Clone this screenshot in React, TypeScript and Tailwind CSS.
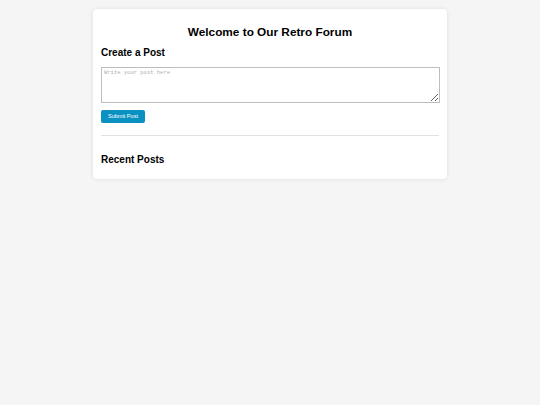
export default function App() {
  return (
    <div className="min-h-screen w-full bg-[#f5f5f5] pt-[9px] font-['Liberation_Sans',Arial,sans-serif] text-black">
      <div className="mx-auto flex w-[354px] flex-col rounded-[4px] bg-white px-[8px] pb-[13px] pt-[8px] shadow-[0_0_4px_rgba(0,0,0,0.1)]">
        <h1 className="mt-[8px] text-center text-[11.8px] font-bold leading-[14px]">Welcome to Our Retro Forum</h1>
        <h2 className="mt-[8px] text-[10px] font-bold leading-[12px]">Create a Post</h2>
        <textarea
          className="mt-[8px] h-[36px] w-[339px] border border-[#bdbdbd] px-[2px] py-[1px] font-['Liberation_Mono',monospace] text-[5.5px] leading-[7px] placeholder:text-[#b0b0b0]"
          placeholder="Write your post here"
        />
        <button
          type="button"
          className="mt-[7px] h-[13px] w-[44px] rounded-[2px] bg-[#0b91c1] text-[5.6px] leading-[13px] text-white"
        >
          Submit Post
        </button>
        <div className="mt-[12px] border-t border-[#e2e2e2]" />
        <h2 className="mt-[18px] text-[10px] font-bold leading-[12px]">Recent Posts</h2>
      </div>
    </div>
  );
}
